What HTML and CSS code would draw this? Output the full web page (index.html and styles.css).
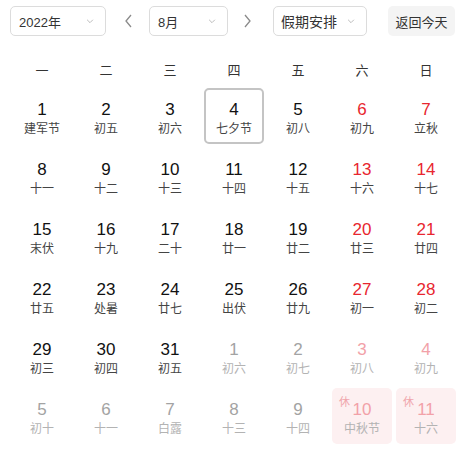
FILE: index.html
```html
<!DOCTYPE html>
<html lang="zh">
<head>
<meta charset="utf-8">
<link rel="stylesheet" href="styles.css">
</head>
<body>
<div class="cal">
  <div class="head">
    <div class="sel sel-year"><span>2022年</span><svg class="chev" viewBox="0 0 12 12"><path d="M2.5 4.5 L6 8 L9.5 4.5" /></svg></div>
    <svg class="arrow arrow-l" viewBox="0 0 12 16"><path d="M8 2 L3 8 L8 14" /></svg>
    <div class="sel sel-month"><span>8月</span><svg class="chev" viewBox="0 0 12 12"><path d="M2.5 4.5 L6 8 L9.5 4.5" /></svg></div>
    <svg class="arrow arrow-r" viewBox="0 0 12 16"><path d="M4 2 L9 8 L4 14" /></svg>
    <div class="sel sel-hol"><span>假期安排</span><svg class="chev" viewBox="0 0 12 12"><path d="M2.5 4.5 L6 8 L9.5 4.5" /></svg></div>
    <div class="btn">返回今天</div>
  </div>
  <div class="week">
    <div>一</div><div>二</div><div>三</div><div>四</div><div>五</div><div>六</div><div>日</div>
  </div>
  <div class="grid">
    <div class="cell"><b>1</b><i>建军节</i></div>
    <div class="cell"><b>2</b><i>初五</i></div>
    <div class="cell"><b>3</b><i>初六</i></div>
    <div class="cell today"><b>4</b><i>七夕节</i></div>
    <div class="cell"><b>5</b><i>初八</i></div>
    <div class="cell we"><b>6</b><i>初九</i></div>
    <div class="cell we"><b>7</b><i>立秋</i></div>

    <div class="cell"><b>8</b><i>十一</i></div>
    <div class="cell"><b>9</b><i>十二</i></div>
    <div class="cell"><b>10</b><i>十三</i></div>
    <div class="cell"><b>11</b><i>十四</i></div>
    <div class="cell"><b>12</b><i>十五</i></div>
    <div class="cell we"><b>13</b><i>十六</i></div>
    <div class="cell we"><b>14</b><i>十七</i></div>

    <div class="cell"><b>15</b><i>末伏</i></div>
    <div class="cell"><b>16</b><i>十九</i></div>
    <div class="cell"><b>17</b><i>二十</i></div>
    <div class="cell"><b>18</b><i>廿一</i></div>
    <div class="cell"><b>19</b><i>廿二</i></div>
    <div class="cell we"><b>20</b><i>廿三</i></div>
    <div class="cell we"><b>21</b><i>廿四</i></div>

    <div class="cell"><b>22</b><i>廿五</i></div>
    <div class="cell"><b>23</b><i>处暑</i></div>
    <div class="cell"><b>24</b><i>廿七</i></div>
    <div class="cell"><b>25</b><i>出伏</i></div>
    <div class="cell"><b>26</b><i>廿九</i></div>
    <div class="cell we"><b>27</b><i>初一</i></div>
    <div class="cell we"><b>28</b><i>初二</i></div>

    <div class="cell"><b>29</b><i>初三</i></div>
    <div class="cell"><b>30</b><i>初四</i></div>
    <div class="cell"><b>31</b><i>初五</i></div>
    <div class="cell other"><b>1</b><i>初六</i></div>
    <div class="cell other"><b>2</b><i>初七</i></div>
    <div class="cell other we"><b>3</b><i>初八</i></div>
    <div class="cell other we"><b>4</b><i>初九</i></div>

    <div class="cell other"><b>5</b><i>初十</i></div>
    <div class="cell other"><b>6</b><i>十一</i></div>
    <div class="cell other"><b>7</b><i>白露</i></div>
    <div class="cell other"><b>8</b><i>十三</i></div>
    <div class="cell other"><b>9</b><i>十四</i></div>
    <div class="cell other we hol"><span class="rest">休</span><b>10</b><i>中秋节</i></div>
    <div class="cell other we hol"><span class="rest">休</span><b>11</b><i>十六</i></div>
  </div>
</div>
</body>
</html>
```
FILE: styles.css
```css
* { box-sizing: border-box; }
html, body { margin: 0; padding: 0; background: #fff; }
body {
  font-family: "Liberation Sans", "Noto Sans CJK SC", sans-serif;
  color: #222;
}
.cal { width: 463px; padding: 6px 0 0 10px; }
.head {
  display: flex;
  align-items: center;
  height: 30px;
}
.sel {
  flex: none;
  height: 30px;
  border: 1px solid #dcdcdc;
  border-radius: 5px;
  display: flex;
  align-items: center;
  justify-content: space-between;
  padding: 0 10px 0 8px;
  font-size: 13px;
  color: #333;
  background: #fff;
}
.sel-year { width: 96px; }
.sel-month { width: 79px; }
.sel-hol { width: 94px; padding-left: 7px; font-size: 14px; }
.chev { width: 10px; height: 10px; }
.chev path { fill: none; stroke: #b0b0b0; stroke-width: 1; }
.arrow { flex: none; width: 12px; height: 16px; }
.arrow path { fill: none; stroke: #8a8a8a; stroke-width: 1.3; }
.arrow-l { margin: 0 14px 0 17px; }
.arrow-r { margin: 0 20px 0 13px; }
.btn {
  flex: none;
  margin-left: 21px;
  height: 30px;
  width: 67px;
  border-radius: 5px;
  background: #f4f4f4;
  font-size: 13px;
  color: #333;
  display: flex;
  align-items: center;
  justify-content: center;
}
.week {
  display: grid;
  grid-template-columns: repeat(7, 64px);
  height: 34px;
  margin-top: 16px;
  align-items: center;
  text-align: center;
  font-size: 13px;
  color: #333;
}
.grid {
  display: grid;
  grid-template-columns: repeat(7, 64px);
  grid-auto-rows: 60px;
}
.cell {
  position: relative;
  margin: 2px 2px;
  border-radius: 5px;
  display: flex;
  flex-direction: column;
  align-items: center;
  padding-top: 11px;
  border: 2px solid transparent;
}
.cell b {
  font-weight: normal;
  font-size: 17px;
  line-height: 18px;
  color: #111;
}
.cell i {
  font-style: normal;
  font-size: 12px;
  line-height: 14px;
  margin-top: 3px;
  color: #444;
}
.cell.we b { color: #e8262f; }
.cell.today { border-color: #c4c4c4; }
.cell.other b { color: #a3a3a3; }
.cell.other i { color: #b3b3b3; }
.cell.other.we b { color: #f2a1a8; }
.cell.hol { background: #fdf0f1; }
.rest {
  position: absolute;
  left: 5px;
  top: 3px;
  font-size: 11px;
  color: #f0a5ac;
}
```
